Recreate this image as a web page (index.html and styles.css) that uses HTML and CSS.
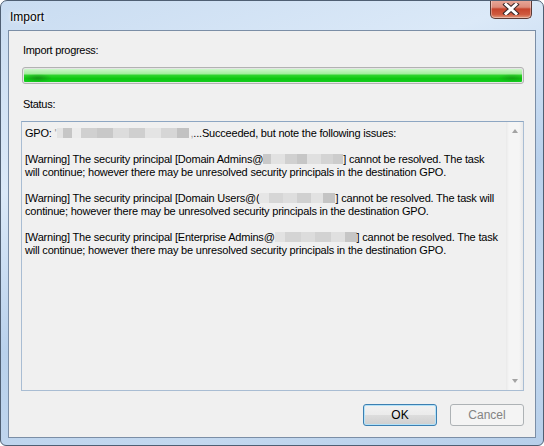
FILE: index.html
```html
<!DOCTYPE html>
<html>
<head>
    <title>Import</title>
    <link rel="stylesheet" href="styles.css">
</head>
<body>
    <div class="window">
        <div class="titlebar">
            <span class="title">Import</span>
            <div class="close">
                <svg width="20" height="12" viewBox="0 0 20 12">
                    <path d="M5 1.5 L15 10.5 M15 1.5 L5 10.5" stroke="#3b2a2a" stroke-width="5" stroke-linecap="square"/>
                    <path d="M5 1.5 L15 10.5 M15 1.5 L5 10.5" stroke="#ffffff" stroke-width="3" stroke-linecap="square"/>
                </svg>
            </div>
        </div>

        <div class="client">
            <div class="label">Import progress:</div>
            <div class="progress"><div class="progress-fill"></div></div>

            <div class="label status-label">Status:</div>
            <div class="status-box">
                <div class="status-text">
                    <p>GPO: <span class="tick">'</span><span class="mosaic m-gpo"></span><span class="tick">,</span>...Succeeded, but note the following issues:</p>
                    <p>[Warning] The security principal [Domain Admins@<span class="mosaic m-a"></span>] cannot be resolved. The task<br>will continue; however there may be unresolved security principals in the destination GPO.</p>
                    <p>[Warning] The security principal [Domain Users@(<span class="mosaic m-b"></span>] cannot be resolved. The task will<br>continue; however there may be unresolved security principals in the destination GPO.</p>
                    <p>[Warning] The security principal [Enterprise Admins@<span class="mosaic m-c"></span>] cannot be resolved. The task<br>will continue; however there may be unresolved security principals in the destination GPO.</p>
                </div>
                <div class="scrollbar">
                    <span class="arrow up"></span>
                    <span class="arrow down"></span>
                </div>
            </div>

            <div class="buttons">
                <button class="btn btn-default">OK</button>
                <button class="btn" disabled>Cancel</button>
            </div>
        </div>
    </div>
</body>
</html>
```

FILE: styles.css
```css
body {
    margin: 0;
    background: #ffffff;
    font-family: "Liberation Sans", Arial, sans-serif;
    font-size: 11px;
    color: #000;
}

.window {
    width: 544px;
    height: 446px;
    box-sizing: border-box;
    border: 1px solid #4f5f73;
    border-radius: 7px 7px 6px 6px;
    background: linear-gradient(160deg, #c9dcf1 0%, #dbe9f8 30%, #b9d1ec 55%, #c3d8ef 80%, #b7cfea 100%);
    display: flex;
    flex-direction: column;
    padding: 0 7px 7px 7px;
    overflow: hidden;
}

.titlebar {
    height: 29px;
    display: flex;
    align-items: center;
    justify-content: space-between;
    position: relative;
}

.title {
    margin-left: 2px;
    margin-top: 2px;
    font-size: 12px;
    color: #000;
    text-shadow: 0 0 6px #fff, 0 0 3px #fff;
}

.close {
    position: absolute;
    top: -1px;
    right: 4px;
    width: 42px;
    height: 19px;
    box-sizing: border-box;
    border: 1px solid #5b3a35;
    border-top: none;
    border-radius: 0 0 5px 5px;
    background: linear-gradient(to bottom, #e9a99b 0%, #dd8c7a 40%, #c6442c 50%, #cf5a3f 80%, #e19a7e 100%);
    box-shadow: inset 0 0 0 1px rgba(255, 255, 255, 0.35);
    display: flex;
    align-items: center;
    justify-content: center;
}

.client {
    flex: 1;
    background: #f0f0f0;
    border: 1px solid #7b8ea6;
    padding: 12px 11px 9px 12px;
    display: flex;
    flex-direction: column;
}

.label {
    margin-left: 2px;
    line-height: 15px;
    letter-spacing: -0.3px;
}

.progress {
    margin-top: 9px;
    height: 17px;
    box-sizing: border-box;
    border: 1px solid #b2b2b2;
    border-radius: 3px;
    background: #e6e6e6;
    padding: 1px;
    margin-left: 1px;
}

.progress-fill {
    height: 100%;
    border-radius: 1px;
    background:
        radial-gradient(ellipse 14px 4px at 14px 9px, rgba(20, 110, 20, 0.55), rgba(20, 110, 20, 0) 100%),
        radial-gradient(ellipse 14px 4px at calc(100% - 10px) 9px, rgba(20, 110, 20, 0.4), rgba(20, 110, 20, 0) 100%),
        linear-gradient(to bottom, #cbf7c9 0%, #a6ee9f 35%, #2ed32c 50%, #0cc80e 75%, #15cc20 100%);
}

.status-label {
    margin-top: 13px;
}

.status-box {
    margin-top: 9px;
    height: 270px;
    box-sizing: border-box;
    border: 1px solid #a9bdd3;
    border-top-color: #8da6c2;
    background: #f0f0f0;
    display: flex;
}

.status-text {
    flex: 1;
    padding: 5px 3px;
    line-height: 13px;
    letter-spacing: -0.2px;
}

.status-text p {
    margin: 0 0 13px 0;
    white-space: nowrap;
}

.tick {
    color: #9a9a9a;
}

.mosaic {
    display: inline-block;
    height: 10px;
    vertical-align: -1px;
}

.m-gpo {
    width: 132px;
    margin: 0 1px;
    background: linear-gradient(90deg, #e4e4e4 0 6px, #c6c6c6 6px 15px, #ececec 15px 24px, #d0d0d0 24px 40px, #c8c8c8 40px 56px, #dcdcdc 56px 72px, #cfcfcf 72px 88px, #e4e4e4 88px 104px, #d6d6d6 104px 120px, #c2c2c2 120px 132px);
}

.m-a {
    width: 80px;
    background: linear-gradient(90deg, #c9c9c9 0 8px, #e2e2e2 8px 22px, #d0d0d0 22px 34px, #c6c6c6 34px 44px, #e0e0e0 44px 58px, #d4d4d4 58px 70px, #cccccc 70px 80px);
}

.m-b {
    width: 76px;
    background: linear-gradient(90deg, #e6e6e6 0 10px, #d6d6d6 10px 24px, #dedede 24px 38px, #d0d0d0 38px 52px, #e2e2e2 52px 64px, #c4c4c4 64px 76px);
}

.m-c {
    width: 82px;
    background: linear-gradient(90deg, #e2e2e2 0 10px, #d4d4d4 10px 26px, #dcdcdc 26px 40px, #d2d2d2 40px 56px, #e0e0e0 56px 70px, #c6c6c6 70px 82px);
}

.scrollbar {
    width: 17px;
    background: linear-gradient(90deg, #e9e9e9 0, #f5f5f5 3px, #f5f5f5 13px, #e9e9e9 17px);
    display: flex;
    flex-direction: column;
    justify-content: space-between;
    align-items: center;
    padding: 7px 0;
    box-sizing: border-box;
}

.arrow {
    width: 0;
    height: 0;
    border-left: 3.5px solid transparent;
    border-right: 3.5px solid transparent;
}

.arrow.up {
    border-bottom: 4px solid #a3a3a3;
}

.arrow.down {
    border-top: 4px solid #a3a3a3;
}

.buttons {
    margin-top: 13px;
    display: flex;
    justify-content: flex-end;
    gap: 13px;
}

.btn {
    width: 74px;
    height: 22px;
    box-sizing: border-box;
    font-family: "Liberation Sans", Arial, sans-serif;
    font-size: 12px;
    border: 1px solid #707070;
    border-radius: 3px;
    background: linear-gradient(to bottom, #f2f2f2 0%, #ebebeb 50%, #dddddd 50%, #cfcfcf 100%);
    color: #000;
    padding: 0;
}

.btn-default {
    border-color: #3c7fb1;
    box-shadow: inset 0 0 0 1px #b4e2f8;
}

.btn:disabled {
    border-color: #adb2b5;
    background: #f4f4f4;
    color: #838383;
}
```
